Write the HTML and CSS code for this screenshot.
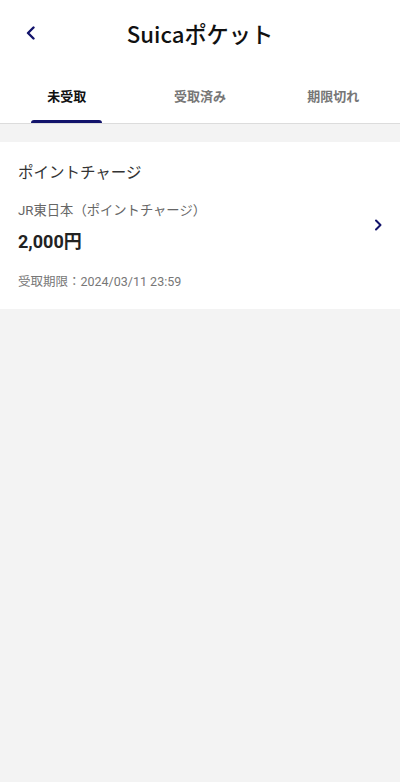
FILE: index.html
```html
<!DOCTYPE html>
<html lang="ja">
<head>
<meta charset="utf-8">
<link rel="stylesheet" href="styles.css">
</head>
<body>
<div class="app">
  <header class="header">
    <div class="back">
      <svg width="12" height="14" viewBox="0 0 12 14"><polyline points="8.5,1.5 3,7 8.5,12.5" fill="none" stroke="#12136b" stroke-width="2.4" stroke-linecap="round" stroke-linejoin="round"/></svg>
    </div>
    <h1 class="title">Suicaポケット</h1>
    <div></div>
  </header>
  <nav class="tabs">
    <div class="tab active"><span class="tab-label">未受取</span><span class="indicator"></span></div>
    <div class="tab"><span class="tab-label">受取済み</span><span class="indicator"></span></div>
    <div class="tab"><span class="tab-label">期限切れ</span><span class="indicator"></span></div>
  </nav>
  <main class="content">
    <section class="card">
      <div class="card-title">ポイントチャージ</div>
      <div class="card-row">
        <div class="card-main">
          <div class="issuer">JR東日本（ポイントチャージ）</div>
          <div class="amount">2,000円</div>
        </div>
        <svg class="chev" width="8" height="12" viewBox="0 0 8 12"><polyline points="2,1.5 6.5,6 2,10.5" fill="none" stroke="#12136b" stroke-width="2" stroke-linecap="round" stroke-linejoin="round"/></svg>
      </div>
      <div class="deadline">受取期限：2024/03/11 23:59</div>
    </section>
  </main>
</div>
</body>
</html>
```
FILE: styles.css
```css
html, body {
  margin: 0;
  padding: 0;
  height: 100%;
}
body {
  font-family: "Roboto", "Noto Sans CJK JP", sans-serif;
  background: #f3f3f3;
  color: #222;
}
.app {
  min-height: 782px;
  background: #f3f3f3;
}
.header {
  height: 66px;
  background: #fff;
  display: grid;
  grid-template-columns: 1fr auto 1fr;
  align-items: center;
}
.back {
  padding-left: 25px;
  display: flex;
  align-items: center;
}
.title {
  margin: 0;
  font-family: "Noto Sans CJK JP", sans-serif;
  font-size: 22.2px;
  font-weight: 500;
  color: #111;
  line-height: 30px;
}
.tabs {
  display: flex;
  background: #fff;
  border-bottom: 1px solid #dcdcdc;
}
.tab {
  flex: 1;
  display: flex;
  flex-direction: column;
  align-items: center;
  padding-top: 20px;
}
.tab-label {
  font-family: "Noto Sans CJK JP", sans-serif;
  font-size: 13px;
  line-height: 20px;
  font-weight: 700;
  color: #777;
  margin-bottom: 14px;
}
.tab.active .tab-label {
  color: #111;
}
.indicator {
  width: 71px;
  height: 3px;
  border-radius: 3px 3px 0 0;
  background: transparent;
}
.tab.active .indicator {
  background: #12136b;
}
.content {
  padding-top: 18px;
}
.card {
  background: #fff;
  padding: 17px 18px 18px 18px;
}
.card-title {
  font-family: "Noto Sans CJK JP", sans-serif;
  font-size: 15.5px;
  line-height: 24px;
  color: #333;
}
.card-row {
  display: flex;
  align-items: center;
  justify-content: space-between;
  margin-top: 18px;
}
.issuer {
  font-size: 13.3px;
  line-height: 20px;
  color: #666;
}
.amount {
  margin-top: 8px;
  font-size: 18px;
  line-height: 26px;
  font-weight: 700;
  color: #222;
}
.chev {
  margin-top: -6px;
}
.deadline {
  margin-top: 18px;
  font-size: 12.5px;
  line-height: 18px;
  color: #777;
}
```
